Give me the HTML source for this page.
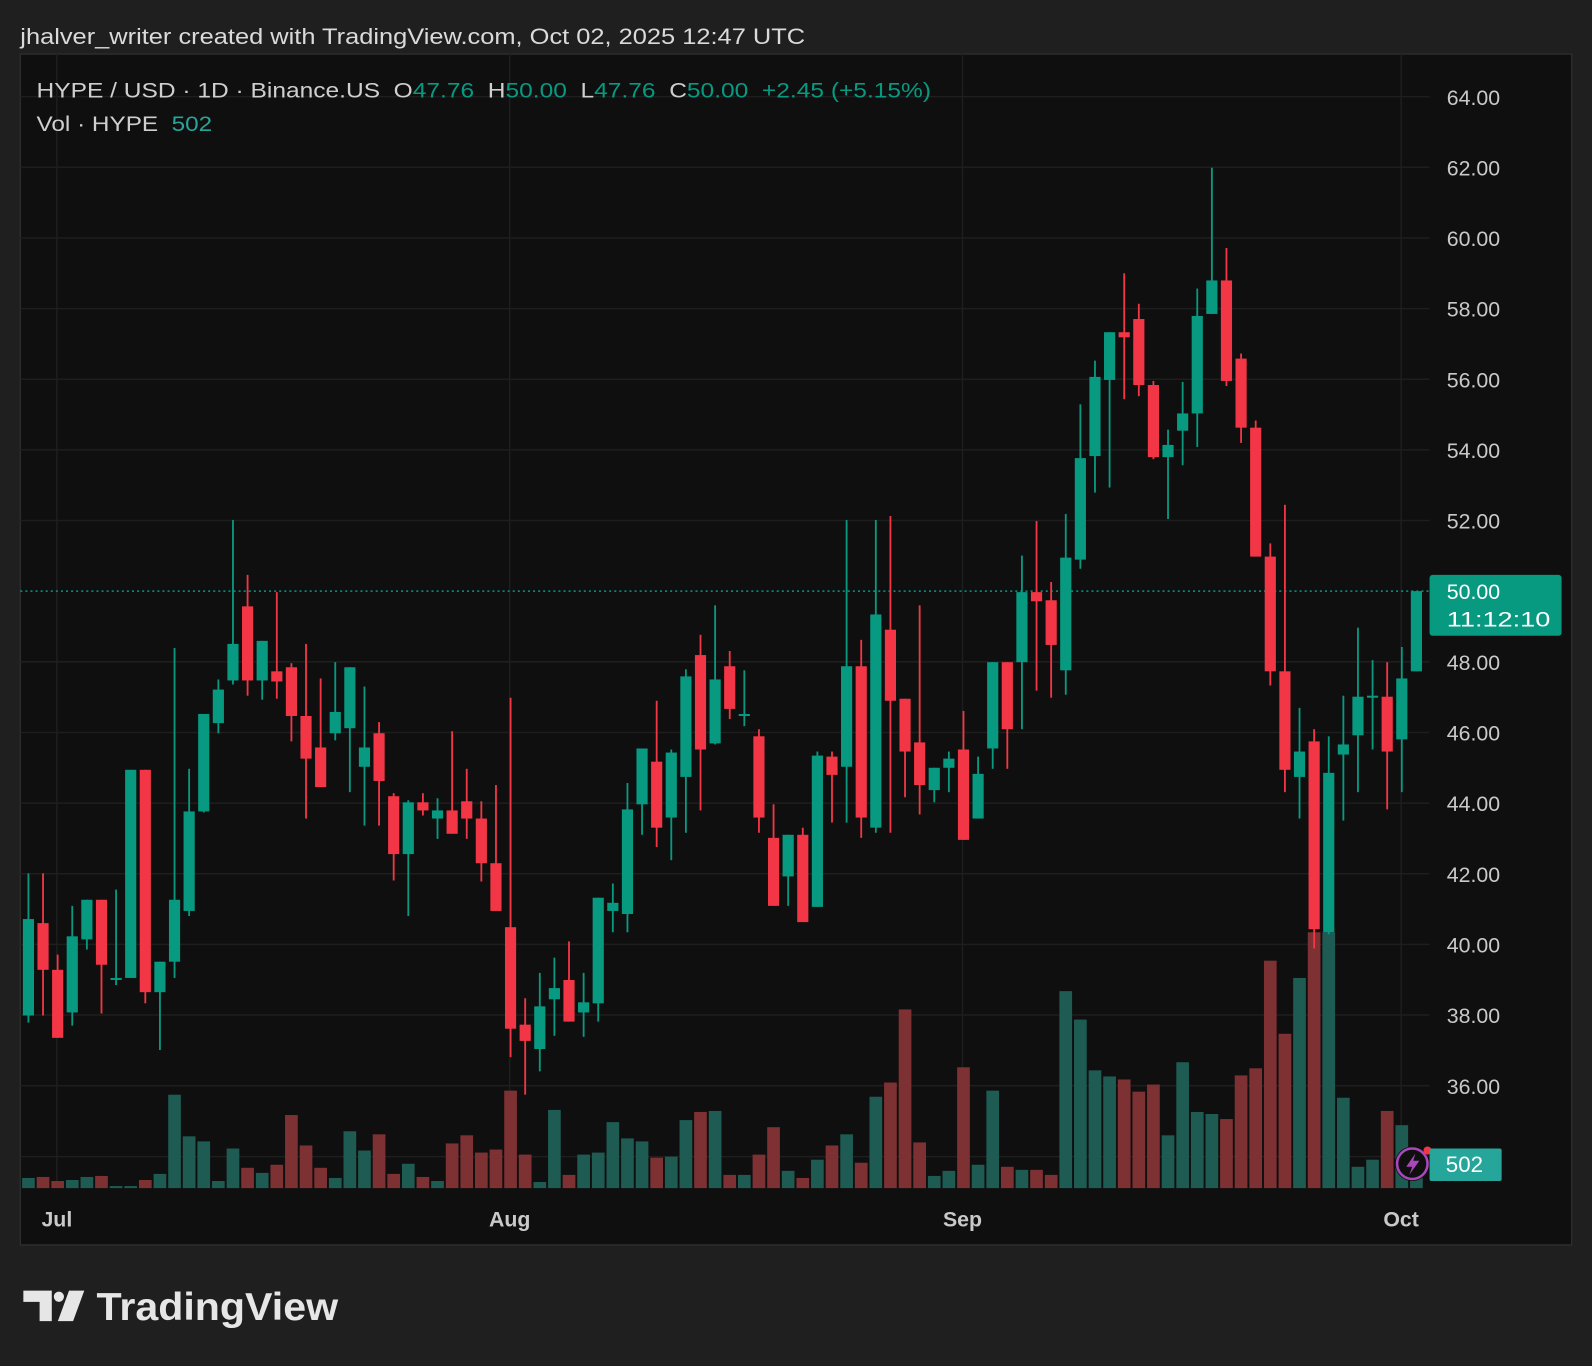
<!DOCTYPE html>
<html><head><meta charset="utf-8"><style>
html,body{margin:0;padding:0;background:#1f1f1f;}
svg{display:block}
text{font-family:"Liberation Sans",sans-serif;white-space:pre;}
</style></head><body>
<svg id="s" width="1592" height="1366" viewBox="0 0 1568 1345" xmlns="http://www.w3.org/2000/svg" xml:space="preserve">
<rect x="0" y="0" width="1568" height="1345" fill="#1f1f1f"/>
<text x="20" y="43" font-size="22" fill="#dadada" textLength="773" lengthAdjust="spacingAndGlyphs">jhalver_writer created with TradingView.com, Oct 02, 2025 12:47 UTC</text>
<rect x="20" y="53" width="1528" height="1173" fill="#0f0f0f" stroke="#2c2c2c" stroke-width="1.5"/>
<g id="grid" stroke="#1e1e1e" stroke-width="1.5"></g>
<g id="vol"></g>
<line x1="20" y1="582" x2="1408" y2="582" stroke="#089981" stroke-width="1.5" stroke-dasharray="2,3"/>
<g id="cand"></g>
<g id="axis" font-size="21" fill="#c9c9c9"></g>
<text x="36" y="96" font-size="21" fill="#cfcfcf" textLength="881" lengthAdjust="spacingAndGlyphs">HYPE / USD · 1D · Binance.US  O<tspan fill="#089981">47.76</tspan>  H<tspan fill="#089981">50.00</tspan>  L<tspan fill="#089981">47.76</tspan>  C<tspan fill="#089981">50.00</tspan>  <tspan fill="#089981">+2.45 (+5.15%)</tspan></text>
<text x="36" y="129" font-size="21" fill="#cfcfcf" textLength="173" lengthAdjust="spacingAndGlyphs">Vol · HYPE  <tspan fill="#26a69a">502</tspan></text>
<rect x="1408" y="566" width="130" height="60" rx="3" fill="#089981"/>
<text x="1425" y="590" font-size="21" fill="#fff">50.00</text>
<text x="1425" y="617" font-size="21" fill="#fff" textLength="102" lengthAdjust="spacingAndGlyphs">11:12:10</text>
<text x="1425" y="1148" font-size="21" fill="#c9c9c9">34.00</text>
<circle cx="1391" cy="1146" r="17" fill="#0f0f0f"/>
<circle cx="1391" cy="1146" r="15" fill="none" stroke="#ab47bc" stroke-width="2.5"/>
<path d="M1394 1136 L1385 1149 L1391 1149 L1388 1157 L1398 1143 L1392 1143 Z" fill="#ab47bc"/>
<circle cx="1406" cy="1133" r="4" fill="#f23645"/>
<rect x="1408" y="1131" width="71" height="32" rx="2" fill="#26a69a"/>
<text x="1424" y="1154" font-size="22" fill="#fff">502</text>
<g font-size="21" font-weight="bold" fill="#c9c9c9" text-anchor="middle">
<text x="56" y="1208">Jul</text><text x="502" y="1208">Aug</text><text x="948" y="1208">Sep</text><text x="1380" y="1208">Oct</text>
</g>
<g fill="#e6e6e6">
<path d="M23 1271 H51 V1301 H39 V1282 H23 Z"/>
<circle cx="58" cy="1277" r="5"/>
<path d="M68 1271 H83 L72 1301 H57 Z"/>
</g>
<text x="95" y="1300" font-size="38" font-weight="bold" fill="#e6e6e6" textLength="238" lengthAdjust="spacingAndGlyphs">TradingView</text>
</svg>
<script>
var ns="http://www.w3.org/2000/svg";
function el(p,t,a){var e=document.createElementNS(ns,t);for(var k in a)e.setAttribute(k,a[k]);document.getElementById(p).appendChild(e);return e;}
var prices=[64,62,60,58,56,54,52,50,48,46,44,42,40,38,36];
function py(p){return 95+(64-p)*34.79;}
prices.forEach(function(p){ if(p!==50) el("grid","line",{x1:20,x2:1408,y1:py(p),y2:py(p)}); });
el("grid","line",{x1:20,x2:1408,y1:1139,y2:1139});
[56,502,948,1380].forEach(function(x){el("grid","line",{x1:x,x2:x,y1:53,y2:1170});});
prices.forEach(function(p){ if(p!==50){var t=el("axis","text",{x:1425,y:py(p)+8});t.textContent=p.toFixed(2);} });
var C=[
["g",905,1000,860,1007,1160],["r",909,955,860,1000,1159],["r",955,1022,940,1022,1163],["g",922,997,892,1010,1162],
["g",886,925,886,935,1159],["r",886,950,886,998,1158],["g",963,965,876,970,1168],["g",758,963,758,963,1168],
["r",758,977,758,988,1162],["g",947,977,947,1034,1156],["g",886,947,638,963,1078],["g",799,897,757,902,1119],
["g",703,799,703,800,1124],["g",679,712,669,722,1163],["g",634,670,512,674,1131],["r",597,670,566,685,1150],
["g",631,670,631,689,1155],["r",661,671,583,688,1147],["r",657,705,653,730,1098],["r",705,747,634,806,1128],
["r",736,775,668,775,1150],["g",701,722,652,729,1160],["g",657,717,657,780,1114],["g",736,755,676,813,1133],
["r",722,769,711,813,1117],["r",784,841,781,867,1156],["g",790,841,788,902,1146],["r",790,798,781,803,1159],
["g",798,806,786,826,1163],["r",798,821,720,821,1126],["r",789,806,757,826,1118],["r",806,850,789,868,1135],
["r",850,897,773,897,1132],["r",913,1013,687,1041,1074],["r",1009,1025,983,1078,1137],["g",991,1033,958,1055,1164],
["g",973,984,943,1020,1093],["r",965,1006,927,1006,1157],["g",987,997,958,1021,1137],["g",884,988,884,1006,1135],
["g",889,897,870,918,1105],["g",797,900,771,918,1121],["g",737,792,737,822,1124],["r",750,815,690,834,1140],
["g",741,805,738,847,1139],["g",666,765,659,820,1103],["r",645,738,625,798,1095],["g",669,732,596,733,1094],
["r",656,698,641,708,1157],["g",703,705,660,715,1157],["r",725,805,718,820,1137],["r",825,892,792,892,1110],
["g",822,863,822,892,1153],["r",822,908,815,908,1160],["g",744,893,740,893,1142],["r",745,763,740,810,1128],
["g",656,755,512,810,1117],["r",656,805,630,825,1145],["g",605,815,512,820,1080],["r",620,690,508,820,1066],
["r",688,740,688,785,994],["r",731,773,596,802,1125],["g",756,778,756,790,1158],["g",747,756,740,780,1153],
["r",738,827,700,827,1051],["g",762,806,745,806,1147],["g",652,737,652,757,1074],["r",652,718,652,757,1149],
["g",583,652,547,718,1152],["r",583,592,513,680,1152],["r",591,635,573,687,1157],["g",549,660,506,684,976],
["g",451,551,398,560,1004],["g",371,449,355,485,1054],["g",327,374,327,480,1060],["r",327,332,269,393,1063],
["r",314,379,299,390,1075],["r",379,450,375,452,1068],["g",438,450,423,511,1118],["g",407,424,376,458,1046],
["g",311,407,284,440,1095],["g",276,309,165,309,1097],["r",276,375,244,380,1102],["r",353,421,348,436,1059],
["r",421,548,414,548,1052],["r",548,661,535,675,946],["r",661,758,497,780,1018],["g",740,765,697,806,963],
["r",730,915,718,934,918],["g",761,918,725,920,918],["g",733,743,685,808,1081],["g",686,724,618,780,1149],
["g",685,687,650,738,1142],["r",686,740,652,797,1094],["g",668,728,637,780,1108],["g",582,661,582,661,1160]
];
var x0=28,dx=14.39,bw=11,vw=12.5;
C.forEach(function(c,i){
 var x=x0+i*dx;
 var vc=c[0]=="g"?"#1e5b53":"#7e3133";
 el("vol","rect",{x:x-vw/2,y:c[5],width:vw,height:1170-c[5],fill:vc});
 var cc=c[0]=="g"?"#089981":"#f23645";
 el("cand","rect",{x:x-0.9,y:c[3],width:1.8,height:Math.max(1,c[4]-c[3]),fill:cc});
 el("cand","rect",{x:x-bw/2,y:c[1],width:bw,height:Math.max(2,c[2]-c[1]),fill:cc});
});
</script>
</body></html>
